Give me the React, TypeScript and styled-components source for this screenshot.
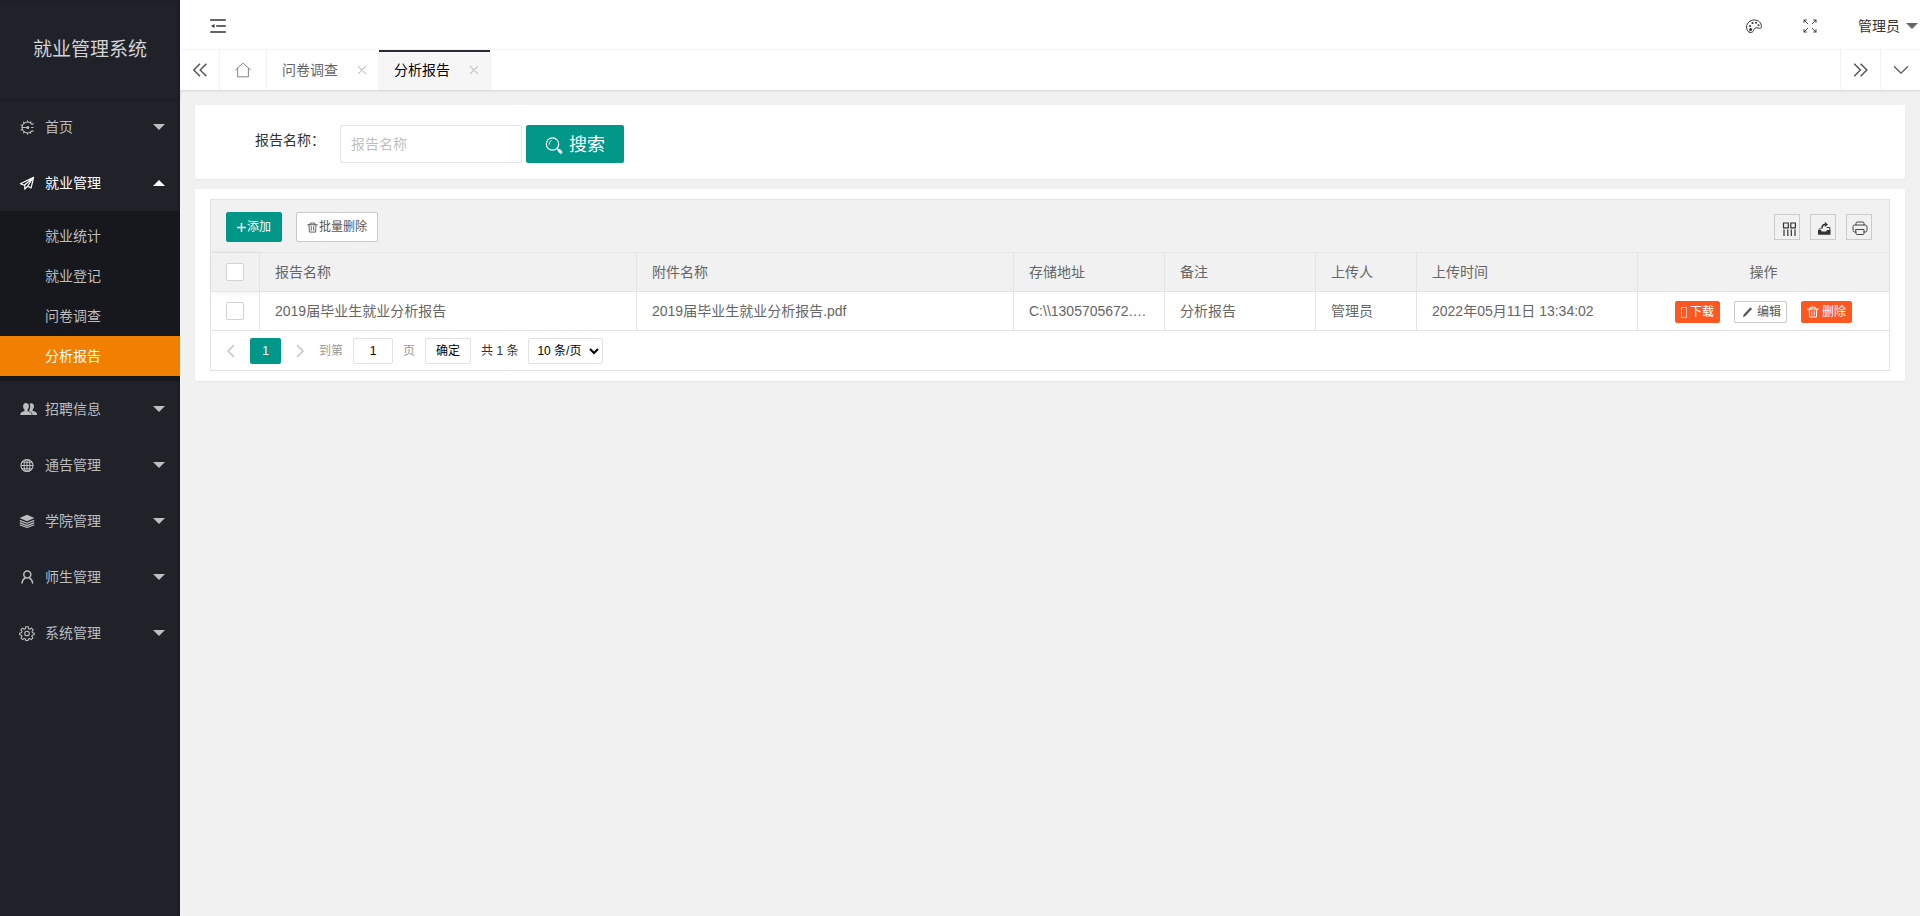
import React, { useState } from "react";
import styled, { createGlobalStyle, css } from "styled-components";

const GlobalStyle = createGlobalStyle`
  *, *::before, *::after { box-sizing: border-box; }
  body {
    margin: 0;
    background: #f1f1f1;
    color: #333;
    font: 14px/24px "Liberation Sans", "Noto Sans CJK SC", sans-serif;
  }
  button, input, select { font: inherit; margin: 0; }
  button { cursor: pointer; }
  a { color: inherit; text-decoration: none; }
  ul { list-style: none; margin: 0; padding: 0; }
`;

/* ---------- icons ---------- */

type IconProps = { w?: number; h?: number; sw?: number; children: React.ReactNode };

const Svg = styled.svg`
  display: block;
  flex: none;
  fill: none;
  stroke: currentColor;
  stroke-linecap: round;
  stroke-linejoin: round;
  .solid { fill: currentColor; stroke: none; }
`;

const Icon = ({ w = 16, h = 16, sw = 1, children }: IconProps) => (
  <Svg width={w} height={h} viewBox={`0 0 ${w} ${h}`} strokeWidth={sw} aria-hidden="true">
    {children}
  </Svg>
);

const GaugeIcon = () => (
  <Icon sw={1.1}>
    <path d="M12.6 4.8A5.500 5.500 0 1 0 12.6 12.200" />
    <path d="M13.200 5.400l1-.8M13.200 11.600l1 .8M8.500 3V1.800M8.500 14v1.200M5.300 4 4.500 3M5.300 13l-.8 1M3.200 6.500 2 6M3.200 10.500 2 11M11.300 3.800l.6-1M11.300 13.200l.6 1" />
    <path d="M3 8.500h6M12.500 8.500h1.500" />
    <circle className="solid" cx="8.800" cy="8.500" r="1.500" />
  </Icon>
);
const PlaneIcon = () => (
  <Icon sw={1.2}>
    <path d="M14.600 2.400 1.400 8.800l3.900 1.500 8-6.600L8.600 11.300l3.500 1.600zM5.800 10.600v3.600l2-2.200" />
  </Icon>
);
const PeopleIcon = () => (
  <Icon w={18} h={16}>
    <path className="solid" d="M12.2 2.2c1.8 0 2.8 1.3 2.8 3.1 0 1.4-.6 2.6-1.4 3.3v1.2c1.600.7 3.800 1.300 4.400 2.900.2.600.1 1.300.1 1.300h-4.600c-.2-2-1.400-3-3.400-3.900V9.200c.9-1 1.200-2.400 1.100-3.900 0-1-.3-1.900-.7-2.500.5-.4 1.100-.6 1.700-.6z" />
    <path className="solid" d="M7 2c1.900 0 2.900 1.400 2.900 3.300 0 1.500-.6 2.700-1.400 3.400v1.300c1.700.7 3.700 1.200 4.100 2.700.2.600.2 1.300.2 1.300H1.200s0-.7.2-1.300c.4-1.500 2.400-2 4.100-2.700V8.700C4.700 8 4.100 6.800 4.100 5.300 4.100 3.400 5.100 2 7 2z" />
  </Icon>
);
const GlobeIcon = () => (
  <Icon sw={1.1}>
    <circle cx="8" cy="8.500" r="6" />
    <ellipse cx="8" cy="8.500" rx="2.900" ry="6" />
    <path d="M8 2.500v12M2 8.500h12M3.200 5.300h9.600M3.200 11.700h9.600" />
  </Icon>
);
const LayersIcon = () => (
  <Icon sw={1.2}>
    <path className="solid" d="M8 1.800 15.400 5 8 8.200.6 5z" />
    <path d="M1.200 7.600 8 10.300l6.800-2.700M1.200 9.900 8 12.600l6.800-2.700M1.200 12 8 14.500l6.800-2.500" />
  </Icon>
);
const UserIcon = () => (
  <Icon sw={1.5}>
    <circle cx="8.300" cy="5.600" r="3.500" />
    <path d="M6.200 8.800C4.300 9.900 3.200 11.600 3 14M10.400 8.800c1.900 1.100 3 2.800 3.200 5.200" />
  </Icon>
);
const GearIcon = () => (
  <Icon sw={1.1}>
    <circle cx="8" cy="8.500" r="2.300" />
    <path d="M6.700 1.800h2.600l.3 2 1.200.5 1.600-1.200 1.800 1.800L13 6.500l.5 1.200 1.700.3v1.800l-1.900.4-.5 1.100 1.100 1.600-1.700 1.700-1.600-1.100-1.200.5-.4 1.500H6.800l-.4-1.500-1.200-.5-1.600 1.100-1.600-1.700 1-1.600-.5-1.100-1.800-.4V8l1.800-.3L3 6.500 1.900 4.900l1.700-1.800 1.600 1.200 1.200-.5z" />
  </Icon>
);
const FoldIcon = () => (
  <Icon sw={1.600}>
    <path d="M1 2h14M7 8h8M1 14h14" strokeLinecap="square" />
    <path className="solid" d="M1 8l3.500-2v4z" />
  </Icon>
);
const PaletteIcon = () => (
  <Icon>
    <path d="M3.300 14.200C1.500 13.400.5 11.400.6 9 .8 4.900 4 2 8.200 2c4.300 0 7.200 2.900 7.200 6.300 0 1.500-.7 2.200-1.900 2-1.700-.4-3.300-.9-4.600-.1-1.400.9-.9 2.200-1.900 3.300-.9 1-2.400 1.200-3.700.7z" />
    <g className="solid">
      <circle cx="4" cy="8" r="1" /><circle cx="6.500" cy="5" r="1.100" /><circle cx="10" cy="4.800" r="1" />
      <circle cx="12.500" cy="7.300" r="1" /><circle cx="4.600" cy="11.500" r="1.500" />
    </g>
  </Icon>
);
const FullscreenIcon = () => (
  <Icon sw={0.900}>
    <path d="M5.800 5.800 2 2M2 4.500V2h2.500M10.200 5.800 14 2M11.500 2H14v2.500M5.800 10.200 2 14M2 11.500V14h2.500M10.200 10.200 14 14M14 11.500V14h-2.500" />
  </Icon>
);
const DoubleLeftIcon = () => (
  <Icon sw={1.500}><path d="M8 1.800 1.800 8 8 14.200M14.400 1.800 8.200 8l6.200 6.200" strokeLinecap="butt" strokeLinejoin="miter" /></Icon>
);
const DoubleRightIcon = () => (
  <Icon sw={1.500}><path d="M1.200 1.800 7.400 8l-6.200 6.200M7.600 1.800 13.800 8l-6.200 6.200" strokeLinecap="butt" strokeLinejoin="miter" /></Icon>
);
const DownIcon = () => (
  <Icon sw={1.300}><path d="M1.500 4.800 8 11.200l6.500-6.400" strokeLinejoin="miter" /></Icon>
);
const HomeIcon = () => (
  <Icon sw={0.800}><path d="M.6 7.800 8 1.200l7.400 6.600M2.600 6.500v8.300h10.800V6.500" strokeLinejoin="miter" /></Icon>
);
const CloseIcon = () => (
  <Icon w={10} h={10} sw={1.200}><path d="M1.300 1.300l7.400 7.400M8.700 1.300 1.300 8.700" /></Icon>
);
const SearchIcon = () => (
  <Icon w={18} h={18} sw={1.200}>
    <circle cx="7.500" cy="8" r="6.200" />
    <path d="M4 8.300A3.800 3.800 0 0 1 6.200 4.600" strokeWidth="1" />
    <path d="M12.300 12.800l.8.8" />
    <path d="M14 14.300l1.800 1.800" strokeWidth="3" />
  </Icon>
);
const PlusIcon = () => (
  <Icon w={9} h={12} sw={1.500}><path d="M4.500 2v9M0 6.500h9" strokeLinecap="butt" /></Icon>
);
const TrashIcon = ({ w = 11 }: { w?: number }) => (
  <Svg width={w} height={w} viewBox="0 0 12 12" strokeWidth="1" aria-hidden="true">
    <path d="M.8 3h10.400M3.500 3V1.200h5V3M2.200 3.200l.4 7.800h6.800l.4-7.800M4.700 5v4M7.300 5v4" />
  </Svg>
);
const PencilIcon = () => (
  <Icon w={14} h={12}>
    <path className="solid" d="M3 11.200l.7-2.800 6.500-6.800c.5-.5 2 .9 1.500 1.600l-6.500 7z" />
  </Icon>
);
const ColumnsIcon = () => (
  <Icon w={15} h={15} sw={1.200}>
    <path d="M2.500 2h4.800v4.800H2.500zM9.800 2h4.600v4.800H9.800zM3 8.500v6.500M6.800 8.500v6.500M10.300 8.500v6.500M14 8.500v6.500" strokeLinecap="butt" strokeLinejoin="miter" />
  </Icon>
);
const ExportIcon = () => (
  <Icon>
    <path className="solid" d="M2 10h3l.8 1.500h4.400L11 10h3.500v4.800H2zM2.300 9.500 4.500 7.500v2z" />
    <path d="M11 7.500h2.800V10" />
    <path d="M6 8c0-2.300 1-3.600 3.400-3.600" strokeWidth="1.500" />
    <path className="solid" d="M8.800 2 12 4.500 8.800 7z" />
  </Icon>
);
const PrintIcon = () => (
  <Icon sw={0.900}>
    <path d="M4 5V3.200C4 2.400 4.500 2 5.200 2h5.600c.7 0 1.200.4 1.200 1.200V5M4 12H2.700C1.700 12 1 11.300 1 10.300V6.700C1 5.700 1.700 5 2.700 5h10.600c1 0 1.700.7 1.700 1.700v3.600c0 1-.7 1.700-1.700 1.700H12M4 9.500h8v4c0 .6-.4 1-1 1H5c-.6 0-1-.4-1-1z" />
  </Icon>
);

/* ---------- frame ---------- */

const Shell = styled.div`
  display: grid;
  grid-template-columns: 180px minmax(0, 1fr);
  min-height: 100vh;
`;

const Sidebar = styled.aside`
  background: #20222a;
  color: #bcbdbf;
  box-shadow: inset -2px 0 2px rgba(0, 0, 0, 0.15);
`;

const Brand = styled.h1`
  margin: 0;
  height: 99px;
  font-size: 19px;
  font-weight: 400;
  line-height: 100px;
  text-align: center;
  color: #d2d3d4;
  box-shadow: 0 1px 2px rgba(0, 0, 0, 0.15);
`;

const Caret = styled.span<{ $up?: boolean }>`
  margin-left: auto;
  border: solid transparent;
  border-width: 0 6px;
  ${(p) => (p.$up ? "border-bottom: 6px solid" : "border-top: 6px solid")};
`;

const MenuButton = styled.button<{ $open?: boolean }>`
  display: flex;
  align-items: center;
  gap: 10px;
  width: 100%;
  height: 56px;
  padding: 0 15px 0 19px;
  border: 0;
  background: none;
  color: ${(p) => (p.$open ? "#fff" : "inherit")};
`;

const IconSlot = styled.span`
  width: 16px;
`;

const SubMenu = styled.ul`
  padding: 5px 0;
  background: #16181d;
`;

const SubLink = styled.a<{ $active?: boolean }>`
  display: block;
  padding-left: 45px;
  line-height: 40px;
  ${(p) => p.$active && css`background: #f18000; color: #fff;`}
`;

const Main = styled.div`
  display: flex;
  flex-direction: column;
`;

const Header = styled.header`
  display: flex;
  align-items: center;
  height: 50px;
  padding: 2px 2px 0 30px;
  background: #fff;
  border-bottom: 1px solid #f6f6f6;
`;

const HeaderTools = styled.div`
  display: flex;
  align-items: center;
  gap: 40px;
  margin-left: auto;
`;

const GhostButton = styled.button`
  display: flex;
  align-items: center;
  padding: 0;
  border: 0;
  background: none;
  color: #333;
`;

const UserButton = styled(GhostButton)`
  gap: 6px;
  & > span:last-child { color: #666; }
`;

const TabBar = styled.nav`
  display: flex;
  height: 40px;
  background: #fff;
  box-shadow: 0 1px 2px rgba(0, 0, 0, 0.12);
`;

const TabControl = styled.button<{ $side: "left" | "right" }>`
  display: flex;
  align-items: center;
  justify-content: center;
  width: 40px;
  padding: 0;
  border: 0 solid #f3f3f3;
  border-${(p) => p.$side}-width: 1px;
  background: none;
  color: #555;
`;

const TabList = styled.ul`
  display: flex;
  flex: 1;
`;

const Tab = styled.li<{ $active?: boolean }>`
  display: flex;
  align-items: center;
  border-right: 1px solid #f3f3f3;
  color: #666;
  ${(p) => p.$active && css`
    background: #f6f6f6;
    box-shadow: inset 0 2px #292b34;
    color: #000;
  `}
`;

const TabLink = styled.a`
  padding: 0 15px;
`;

const TabClose = styled(GhostButton)`
  padding: 0 11px 0 4px;
  color: #c2c2c2;
`;

/* ---------- content ---------- */

const Content = styled.main`
  display: flex;
  flex-direction: column;
  gap: 10px;
  padding: 15px;
`;

const Card = styled.section`
  background: #fff;
  border-radius: 2px;
  box-shadow: 0 1px 2px rgba(0, 0, 0, 0.05);
`;

const SearchForm = styled.form`
  display: flex;
  align-items: flex-start;
  padding: 20px 35px 16px;
`;

const FieldLabel = styled.label`
  width: 110px;
  padding: 5px 15px 0 0;
  line-height: 20px;
  text-align: right;
`;

const TextInput = styled.input`
  width: 182px;
  height: 38px;
  margin-right: 4px;
  padding: 0 10px;
  border: 1px solid #e6e6e6;
  border-radius: 2px;
  background: #fff;
  &::placeholder { color: #bfbfbf; }
`;

const SearchButton = styled.button`
  display: flex;
  align-items: center;
  gap: 6px;
  height: 38px;
  padding: 2px 19px 0;
  border: 0;
  border-radius: 2px;
  background: #009688;
  color: #fff;
  font-size: 18px;
`;

const TableCard = styled(Card)`
  padding: 10px 15px;
`;

const TableBox = styled.div`
  border: 1px solid #e2e2e2;
`;

const Toolbar = styled.div`
  display: flex;
  align-items: center;
  gap: 14px;
  height: 53px;
  padding: 2px 17px 0 15px;
  border-bottom: 1px solid #e6e6e6;
  background: #f1f1f1;
`;

type Tone = "primary" | "plain" | "danger";
const tones: Record<Tone, ReturnType<typeof css>> = {
  primary: css`background: #009688; border-color: #009688; color: #fff;`,
  plain: css`background: #fff; border-color: #c9c9c9; color: #555;`,
  danger: css`background: #ff5722; border-color: #ff5722; color: #fff;`,
};

const Button = styled.button<{ $tone: Tone; $small?: boolean }>`
  display: flex;
  align-items: center;
  gap: ${(p) => (p.$small ? 3 : 1)}px;
  height: ${(p) => (p.$small ? 22 : 30)}px;
  padding: 0 ${(p) => (p.$small ? 5 : 10)}px;
  border: 1px solid;
  border-radius: 2px;
  font-size: 12px;
  line-height: 20px;
  white-space: nowrap;
  ${(p) => tones[p.$tone]}
`;

const ToolIcons = styled.div`
  display: flex;
  gap: 10px;
  margin-left: auto;
`;

const ToolButton = styled.button`
  display: flex;
  align-items: center;
  justify-content: center;
  width: 26px;
  height: 26px;
  padding: 2px 0 0 2px;
  border: 1px solid #ccc;
  background: none;
  color: #333;
`;

const Table = styled.table`
  width: 100%;
  table-layout: fixed;
  border-collapse: separate;
  border-spacing: 0;
  color: #666;
  th, td {
    height: 39px;
    padding: 0 15px;
    border: solid #e4e4e4;
    border-width: 0 1px 1px 0;
    font-weight: 400;
    text-align: left;
    white-space: nowrap;
    overflow: hidden;
    text-overflow: ellipsis;
  }
  th { background: #f1f1f1; }
  th:last-child, td:last-child { border-right: 0; text-align: center; }
  th:first-child { box-shadow: 1px 0 6px rgba(0, 0, 0, 0.08); overflow: visible; }
`;

const Col = styled.col<{ $w?: number }>`
  width: ${(p) => (p.$w ? p.$w + "px" : "auto")};
`;

const Checkbox = styled.input`
  appearance: none;
  display: block;
  width: 18px;
  height: 18px;
  border: 1px solid #d2d2d2;
  border-radius: 2px;
  background: #fff;
  &:checked { background: #009688; border-color: #009688; }
`;

const RowActions = styled.div`
  display: flex;
  justify-content: center;
  gap: 14px;
  padding-top: 2px;
`;

const BlankGlyph = styled.span`
  width: 6px;
  height: 11px;
  border: 1px solid #ffc9b8;
`;

const Pager = styled.div`
  display: flex;
  align-items: center;
  gap: 10px;
  height: 39px;
  padding: 0 15px;
  color: #999;
  font-size: 12px;
`;

const PageSteps = styled.div`
  display: flex;
  align-items: center;
  gap: 14px;
`;

const PageArrow = styled(GhostButton)`
  color: #c6c6c6;
`;

const PageCurrent = styled.button`
  width: 31px;
  height: 26px;
  padding: 0;
  border: 0;
  border-radius: 2px;
  background: #009688;
  color: #fff;
`;

const PageInput = styled.input`
  width: 40px;
  height: 26px;
  padding: 0;
  border: 1px solid #e2e2e2;
  border-radius: 2px;
  color: #000;
  text-align: center;
`;

const PageGo = styled.button`
  height: 26px;
  padding: 0 10px;
  border: 1px solid #e2e2e2;
  border-radius: 2px;
  background: #fff;
  color: #000;
`;

const PageTotal = styled.span`
  color: #333;
`;

const PageSize = styled.select`
  width: 75px;
  height: 26px;
  padding: 0 4px;
  border: 1px solid #e2e2e2;
  border-radius: 2px;
  background: #fff;
  color: #000;
`;

const menu = [
  { label: "首页", icon: <GaugeIcon /> },
  { label: "就业管理", icon: <PlaneIcon />, children: ["就业统计", "就业登记", "问卷调查", "分析报告"] },
  { label: "招聘信息", icon: <PeopleIcon /> },
  { label: "通告管理", icon: <GlobeIcon /> },
  { label: "学院管理", icon: <LayersIcon /> },
  { label: "师生管理", icon: <UserIcon /> },
  { label: "系统管理", icon: <GearIcon /> },
];

const tabs = ["问卷调查", "分析报告"];
const current = "分析报告";

const columns: { title: string; width?: number }[] = [
  { title: "报告名称" },
  { title: "附件名称" },
  { title: "存储地址", width: 151 },
  { title: "备注", width: 151 },
  { title: "上传人", width: 101 },
  { title: "上传时间", width: 221 },
  { title: "操作", width: 251 },
];

const rows = [
  ["2019届毕业生就业分析报告", "2019届毕业生就业分析报告.pdf", "C:\\\\1305705672.pdf", "分析报告", "管理员", "2022年05月11日 13:34:02"],
];

export default function App() {
  const [open, setOpen] = useState("就业管理");
  const [page, setPage] = useState("1");

  return (
    <>
      <GlobalStyle />
      <Shell>
        <Sidebar>
          <Brand>就业管理系统</Brand>
          <ul>
            {menu.map((m) => {
              const expanded = !!m.children && open === m.label;
              return (
                <li key={m.label}>
                  <MenuButton $open={expanded} aria-expanded={expanded} onClick={() => setOpen(expanded ? "" : m.label)}>
                    <IconSlot>{m.icon}</IconSlot>
                    {m.label}
                    <Caret $up={expanded} />
                  </MenuButton>
                  {expanded && (
                    <SubMenu>
                      {m.children!.map((c) => (
                        <li key={c}>
                          <SubLink href="#" $active={c === current}>{c}</SubLink>
                        </li>
                      ))}
                    </SubMenu>
                  )}
                </li>
              );
            })}
          </ul>
        </Sidebar>

        <Main>
          <Header>
            <GhostButton aria-label="侧边伸缩"><FoldIcon /></GhostButton>
            <HeaderTools>
              <GhostButton aria-label="主题"><PaletteIcon /></GhostButton>
              <GhostButton aria-label="全屏"><FullscreenIcon /></GhostButton>
              <UserButton>管理员<Caret /></UserButton>
            </HeaderTools>
          </Header>

          <TabBar>
            <TabControl $side="right" aria-label="向左"><DoubleLeftIcon /></TabControl>
            <TabList>
              <Tab><TabLink href="#" aria-label="首页"><HomeIcon /></TabLink></Tab>
              {tabs.map((t) => (
                <Tab key={t} $active={t === current}>
                  <TabLink href="#">{t}</TabLink>
                  <TabClose aria-label="关闭"><CloseIcon /></TabClose>
                </Tab>
              ))}
            </TabList>
            <TabControl $side="left" aria-label="向右"><DoubleRightIcon /></TabControl>
            <TabControl $side="left" aria-label="更多"><DownIcon /></TabControl>
          </TabBar>

          <Content>
            <Card>
              <SearchForm onSubmit={(e) => e.preventDefault()}>
                <FieldLabel htmlFor="report-name">报告名称：</FieldLabel>
                <TextInput id="report-name" type="text" placeholder="报告名称" />
                <SearchButton type="submit"><SearchIcon />搜索</SearchButton>
              </SearchForm>
            </Card>

            <TableCard>
              <TableBox>
                <Toolbar>
                  <Button $tone="primary"><PlusIcon />添加</Button>
                  <Button $tone="plain"><TrashIcon />批量删除</Button>
                  <ToolIcons>
                    <ToolButton aria-label="筛选列"><ColumnsIcon /></ToolButton>
                    <ToolButton aria-label="导出"><ExportIcon /></ToolButton>
                    <ToolButton aria-label="打印"><PrintIcon /></ToolButton>
                  </ToolIcons>
                </Toolbar>

                <Table>
                  <colgroup>
                    <Col $w={49} />
                    {columns.map((c) => <Col key={c.title} $w={c.width} />)}
                  </colgroup>
                  <thead>
                    <tr>
                      <th scope="col"><Checkbox type="checkbox" aria-label="全选" /></th>
                      {columns.map((c) => <th key={c.title} scope="col">{c.title}</th>)}
                    </tr>
                  </thead>
                  <tbody>
                    {rows.map((r) => (
                      <tr key={r[0]}>
                        <td><Checkbox type="checkbox" aria-label={r[0]} /></td>
                        {r.map((v, i) => <td key={i}>{v}</td>)}
                        <td>
                          <RowActions>
                            <Button $small $tone="danger"><BlankGlyph />下载</Button>
                            <Button $small $tone="plain"><PencilIcon />编辑</Button>
                            <Button $small $tone="danger"><TrashIcon w={12} />删除</Button>
                          </RowActions>
                        </td>
                      </tr>
                    ))}
                  </tbody>
                </Table>

                <Pager>
                  <PageSteps>
                    <PageArrow aria-label="上一页">
                      <Icon w={10} h={14} sw={1.600}><path d="M7.500 1.500 2 7l5.500 5.500" /></Icon>
                    </PageArrow>
                    <PageCurrent aria-current="page">1</PageCurrent>
                    <PageArrow aria-label="下一页">
                      <Icon w={10} h={14} sw={1.600}><path d="M2.500 1.500 8 7l-5.500 5.500" /></Icon>
                    </PageArrow>
                    <label htmlFor="page-no">到第</label>
                  </PageSteps>
                  <PageInput id="page-no" type="text" value={page} onChange={(e) => setPage(e.target.value)} />
                  <span>页</span>
                  <PageGo>确定</PageGo>
                  <PageTotal>共 1 条</PageTotal>
                  <PageSize aria-label="每页条数">
                    <option>10 条/页</option>
                    <option>20 条/页</option>
                    <option>30 条/页</option>
                  </PageSize>
                </Pager>
              </TableBox>
            </TableCard>
          </Content>
        </Main>
      </Shell>
    </>
  );
}
